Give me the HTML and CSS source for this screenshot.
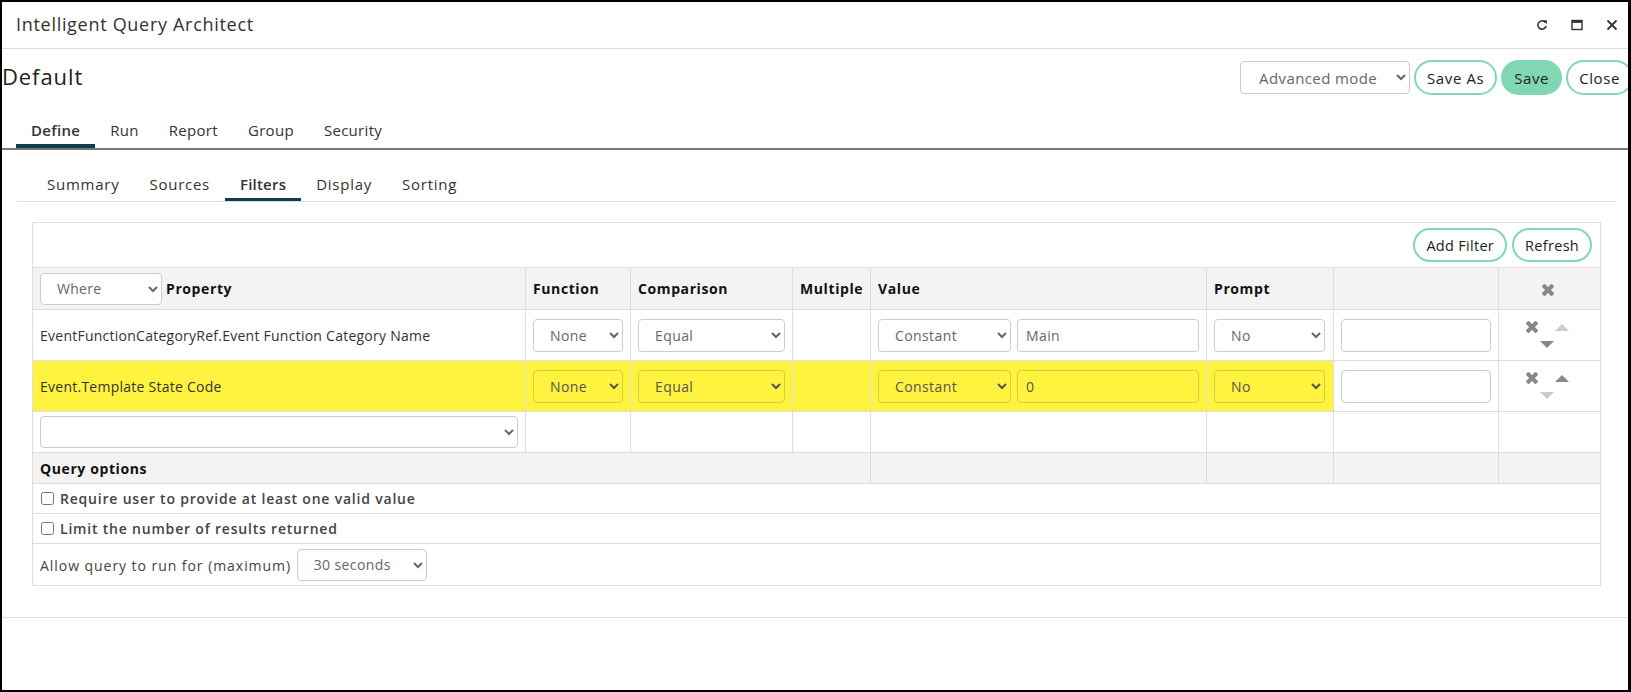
FILE: index.html
```html
<!DOCTYPE html>
<html lang="en">
<head>
    <meta charset="UTF-8">
    <title>Intelligent Query Architect</title>
    <link rel="stylesheet" href="styles.css">
</head>
<body>
    <div class="window">
        <div class="titlebar">
            <span class="title">Intelligent Query Architect</span>
            <div class="win-icons">
                <svg width="12" height="12" viewBox="0 0 12 12"><path d="M9.6 3.6A4.2 4.2 0 1 0 10.2 7" fill="none" stroke="#333" stroke-width="1.6"/><path d="M6.8 1.2h4v4z" fill="#333"/></svg>
                <svg width="12" height="12" viewBox="0 0 12 12"><rect x="1" y="1.5" width="10" height="9" fill="none" stroke="#333" stroke-width="1.4"/><rect x="1" y="1.5" width="10" height="2.4" fill="#333"/></svg>
                <svg width="12" height="12" viewBox="0 0 12 12"><path d="M1.5 1.5l9 9M10.5 1.5l-9 9" stroke="#333" stroke-width="1.8"/></svg>
            </div>
        </div>

        <div class="toolbar">
            <h1>Default</h1>
            <div class="actions">
                <select class="mode"><option>Advanced mode</option></select>
                <button class="btn">Save As</button>
                <button class="btn primary">Save</button>
                <button class="btn">Close</button>
            </div>
        </div>

        <nav class="tabs">
            <a class="active">Define</a>
            <a>Run</a>
            <a>Report</a>
            <a>Group</a>
            <a>Security</a>
        </nav>

        <nav class="subtabs">
            <a>Summary</a>
            <a>Sources</a>
            <a class="active">Filters</a>
            <a>Display</a>
            <a>Sorting</a>
        </nav>

        <div class="content">
            <table class="filters">
                <colgroup>
                    <col style="width:493px">
                    <col style="width:105px">
                    <col style="width:162px">
                    <col style="width:78px">
                    <col style="width:336px">
                    <col style="width:127px">
                    <col style="width:165px">
                    <col style="width:102px">
                </colgroup>
                <tr class="button-row">
                    <td colspan="8">
                        <div class="table-actions">
                            <button class="btn">Add Filter</button>
                            <button class="btn">Refresh</button>
                        </div>
                    </td>
                </tr>
                <tr class="head">
                    <th>
                        <div class="prop-head">
                            <select class="where"><option>Where</option></select>
                            <span>Property</span>
                        </div>
                    </th>
                    <th>Function</th>
                    <th>Comparison</th>
                    <th>Multiple</th>
                    <th>Value</th>
                    <th>Prompt</th>
                    <th></th>
                    <th class="ops"><span class="x-icon"></span></th>
                </tr>
                <tr class="filter">
                    <td>EventFunctionCategoryRef.Event Function Category Name</td>
                    <td><select class="fn"><option>None</option></select></td>
                    <td><select class="cmp"><option>Equal</option></select></td>
                    <td></td>
                    <td>
                        <div class="value-pair">
                            <select class="kind"><option>Constant</option></select>
                            <input class="val" type="text" value="Main">
                        </div>
                    </td>
                    <td><select class="prompt"><option>No</option></select></td>
                    <td class="white"><input class="extra" type="text"></td>
                    <td class="ops">
                        <div class="op-grid">
                            <span class="x-icon"></span>
                            <span class="tri up off"></span>
                            <span class="tri down"></span>
                        </div>
                    </td>
                </tr>
                <tr class="filter highlight">
                    <td>Event.Template State Code</td>
                    <td><select class="fn"><option>None</option></select></td>
                    <td><select class="cmp"><option>Equal</option></select></td>
                    <td></td>
                    <td>
                        <div class="value-pair">
                            <select class="kind"><option>Constant</option></select>
                            <input class="val" type="text" value="0">
                        </div>
                    </td>
                    <td><select class="prompt"><option>No</option></select></td>
                    <td class="white"><input class="extra" type="text"></td>
                    <td class="ops">
                        <div class="op-grid">
                            <span class="x-icon"></span>
                            <span class="tri up"></span>
                            <span class="tri down off"></span>
                        </div>
                    </td>
                </tr>
                <tr class="new-row">
                    <td><select class="add-prop"><option></option></select></td>
                    <td></td><td></td><td></td><td></td><td></td><td></td><td></td>
                </tr>
                <tr class="section">
                    <th colspan="4">Query options</th>
                    <th></th><th></th><th></th><th></th>
                </tr>
                <tr class="option">
                    <td colspan="8"><label><input type="checkbox"> Require user to provide at least one valid value</label></td>
                </tr>
                <tr class="option">
                    <td colspan="8"><label><input type="checkbox"> Limit the number of results returned</label></td>
                </tr>
                <tr class="timeout">
                    <td colspan="8">
                        Allow query to run for (maximum)
                        <select class="secs"><option>30 seconds</option></select>
                    </td>
                </tr>
            </table>
        </div>

        <div class="footer-line"></div>
    </div>
</body>
</html>
```

FILE: styles.css
```css
* {
    box-sizing: border-box;
}

body {
    margin: 0;
    background: #fff;
    font-family: 'Open Sans', sans-serif;
    color: #333;
}

.window {
    width: 1631px;
    height: 692px;
    border: 2px solid #000;
    border-right-width: 3px;
    overflow: hidden;
}

.titlebar {
    display: flex;
    align-items: center;
    justify-content: space-between;
    height: 47px;
    padding: 0 10px 0 14px;
    border-bottom: 1px solid #ddd;
}

.title {
    margin-bottom: 3px;
    font-size: 18px;
    letter-spacing: 0.7px;
    color: #333;
}

.win-icons {
    display: flex;
    gap: 23px;
}

.toolbar {
    display: flex;
    align-items: center;
    justify-content: space-between;
    height: 57px;
    margin-right: -5px;
}

.toolbar h1 {
    margin: 0 0 4px;
    font-size: 22px;
    font-weight: 400;
    letter-spacing: 0.9px;
    color: #222;
}

.actions {
    display: flex;
    align-items: center;
    gap: 4px;
}

select,
input[type="text"] {
    height: 33px;
    border: 1px solid #ccc;
    border-radius: 4px;
    background-color: #fff;
    font-family: inherit;
    font-size: 14px;
    color: #666;
    padding: 0 8px 0 12px;
}

input[type="text"] {
    padding-left: 8px;
}

.mode {
    width: 170px;
    padding-left: 14px;
    font-size: 15px;
    letter-spacing: 0.4px;
}

.btn {
    height: 35px;
    padding: 0 11px;
    border: 2px solid #80d8b2;
    border-radius: 18px;
    background: #fff;
    font-family: inherit;
    font-size: 15px;
    letter-spacing: 0.6px;
    color: #222;
}

.btn.primary {
    background: #80d8b2;
}

.tabs {
    display: flex;
    padding-left: 14px;
    border-bottom: 2px solid #777;
}

.tabs a,
.subtabs a {
    padding: 14px 15px 4px;
    line-height: 20px;
    font-size: 15px;
    letter-spacing: 0.3px;
    color: #333;
    border-bottom: 4px solid transparent;
}

.tabs a.active {
    font-weight: 600;
    border-bottom-color: #0e3e4c;
}

.subtabs {
    display: flex;
    margin: 14px 12px 0 15px;
    padding-left: 15px;
    border-bottom: 1px solid #ddd;
}

.subtabs a {
    padding: 10px 15px 4px;
    border-bottom-width: 3px;
    letter-spacing: 0.75px;
}

.subtabs a.active {
    font-weight: 600;
    letter-spacing: 0.2px;
    border-bottom-color: #0e3e4c;
}

.content {
    padding: 20px 28px 0 30px;
}

.filters {
    width: 1568px;
    table-layout: fixed;
    border-collapse: collapse;
    border: 1px solid #ddd;
    font-size: 14px;
    letter-spacing: 0.25px;
}

.filters td,
.filters th {
    border: 1px solid #ddd;
    padding: 0 7px;
    vertical-align: middle;
    text-align: left;
}

.filters th {
    background: #f3f3f3;
    font-weight: 700;
    letter-spacing: 0.6px;
    color: #111;
}

.button-row td {
    height: 45px;
    border-bottom: 1px solid #ddd;
}

.table-actions {
    display: flex;
    justify-content: flex-end;
    gap: 5px;
    padding-right: 1px;
}

.table-actions .btn {
    height: 34px;
    font-size: 14.5px;
    letter-spacing: 0.3px;
}

.head th {
    height: 42px;
}

.prop-head {
    display: flex;
    align-items: center;
    gap: 4px;
}

.where {
    width: 122px;
    height: 32px;
    font-weight: 400;
    letter-spacing: 0.3px;
}

.filter td {
    height: 51px;
}

.filter td:first-child {
    color: #333;
}

.fn { width: 90px; }
.cmp { width: 147px; }
.kind { width: 133px; }
.prompt { width: 111px; }

.filter select,
.filter input {
    letter-spacing: 0.4px;
}

.value-pair {
    display: flex;
    gap: 6px;
}

.val { width: 182px; }
.extra { width: 150px; }

.highlight td {
    background: #fff33f;
}

.highlight td.white,
.highlight td.ops {
    background: #fff;
}

.highlight select,
.highlight input.val {
    background-color: transparent;
    border-color: #d9cc3c;
    color: #555;
}

.ops {
    text-align: center;
}

.filters th.ops {
    text-align: center;
    padding-left: 4px;
}

.op-grid {
    display: grid;
    grid-template-columns: 14px 14px;
    grid-template-rows: 18px 16px;
    column-gap: 16px;
    justify-content: center;
    justify-items: center;
    align-items: center;
    margin-left: -6px;
}

.op-grid .tri.down {
    grid-column: 1 / span 2;
    grid-row: 2;
}

.x-icon {
    display: inline-block;
    position: relative;
    width: 12px;
    height: 12px;
    vertical-align: middle;
}

.x-icon::before,
.x-icon::after {
    content: '';
    position: absolute;
    left: -1px;
    top: 4px;
    width: 14px;
    height: 4px;
    border-radius: 1px;
    background: #888;
    transform: rotate(45deg);
}

.x-icon::after {
    transform: rotate(-45deg);
}

.tri {
    width: 0;
    height: 0;
    border-left: 7px solid transparent;
    border-right: 7px solid transparent;
}

.tri.up {
    border-bottom: 7px solid #888;
}

.tri.down {
    border-top: 7px solid #888;
}

.tri.up.off {
    border-bottom-color: #ccc;
}

.tri.down.off {
    border-top-color: #ccc;
}

.new-row td {
    height: 41px;
}

.add-prop {
    width: 478px;
    height: 32px;
}

.section th {
    height: 31px;
    font-weight: 700;
}

.option td {
    height: 30px;
    font-weight: 600;
    letter-spacing: 0.8px;
    color: #444;
}

.option label {
    display: flex;
    align-items: center;
    gap: 6px;
}

.option input[type="checkbox"] {
    width: 13px;
    height: 13px;
    margin: 0 0 0 1px;
}

.timeout td {
    height: 42px;
    letter-spacing: 0.95px;
    color: #444;
}

.secs {
    width: 130px;
    height: 32px;
    margin-left: 1px;
    letter-spacing: 0.4px;
}

.footer-line {
    margin-top: 31px;
    border-top: 1px solid #ddd;
}
```
